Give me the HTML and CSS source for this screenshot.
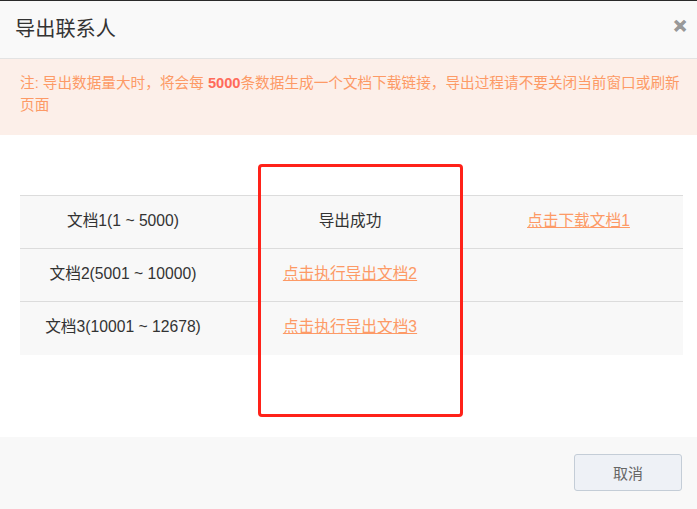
FILE: index.html
```html
<!DOCTYPE html>
<html lang="zh-CN">
<head>
<meta charset="utf-8">
<title>导出联系人</title>
<link rel="stylesheet" href="styles.css">
</head>
<body>
<div class="dialog">
  <div class="header">
    <span class="title">导出联系人</span>
    <span class="close">&#x2715;</span>
  </div>
  <div class="notice">注: 导出数据量大时，将会每 <b>5000</b>条数据生成一个文档下载链接，导出过程请不要关闭当前窗口或刷新页面</div>
  <div class="body">
    <table class="docs">
      <colgroup><col class="c1"><col class="c2"><col class="c3"></colgroup>
      <tr><td>文档1(1 ~ 5000)</td><td>导出成功</td><td><a>点击下载文档1</a></td></tr>
      <tr><td>文档2(5001 ~ 10000)</td><td><a>点击执行导出文档2</a></td><td></td></tr>
      <tr><td>文档3(10001 ~ 12678)</td><td><a>点击执行导出文档3</a></td><td></td></tr>
    </table>
    <div class="mark"></div>
  </div>
  <div class="footer">
    <button class="btn">取消</button>
  </div>
</div>
</body>
</html>
```
FILE: styles.css
```css
* { box-sizing: border-box; }
html, body { margin: 0; padding: 0; }
body {
  width: 697px;
  height: 509px;
  overflow: hidden;
  background: #fff;
  font-family: "Liberation Sans", "Noto Sans CJK SC", sans-serif;
  color: #333;
}
.dialog {
  display: flex;
  flex-direction: column;
  height: 509px;
  border-top: 1px solid #2a2a2a;
}
.header {
  height: 58px;
  background: #f9f9f9;
  border-bottom: 1px solid #e3e3e3;
  display: flex;
  align-items: center;
  justify-content: space-between;
  padding: 0 10px 0 15px;
}
.title {
  font-size: 20.2px;
  color: #333;
  margin-top: -4px;
}
.close {
  font-size: 17px;
  font-weight: bold;
  color: #999;
  margin-top: -6px;
  -webkit-text-stroke: 1px #999;
}
.notice {
  background: #fcefe9;
  color: #fd9a66;
  font-size: 14.65px;
  line-height: 22px;
  padding: 13px 12px 20px 20px;
  height: 76px;
}
.notice b { color: #ff6b5a; }
.body {
  position: relative;
  flex: 1;
  padding: 60px 14px 0 20px;
}
.docs {
  width: 663px;
  border-collapse: collapse;
  background: #f8f8f8;
  font-size: 15.7px;
  table-layout: fixed;
}
.c1 { width: 206px; }
.c2 { width: 248px; }
.c3 { width: 209px; }
.docs td {
  height: 53px;
  text-align: center;
  border-top: 1px solid #dcdcdc;
  padding: 0 0 5px 0;
  color: #333;
}
.docs a {
  color: #fd9a66;
  text-decoration: underline;
  cursor: pointer;
}
.mark {
  position: absolute;
  left: 258px;
  top: 29px;
  width: 205px;
  height: 253px;
  border: 3px solid #ff2219;
  border-radius: 4px;
}
.footer {
  height: 72px;
  background: #f8f8f8;
  display: flex;
  align-items: center;
  justify-content: flex-end;
  padding: 0 15px 0 0;
}
.btn {
  width: 108px;
  height: 37px;
  background: #eef1f6;
  border: 1px solid #c4cdd7;
  border-radius: 3px;
  font-family: "Liberation Sans", "Noto Sans CJK SC", sans-serif;
  font-size: 15px;
  color: #666;
  margin-top: -1px;
}
```
